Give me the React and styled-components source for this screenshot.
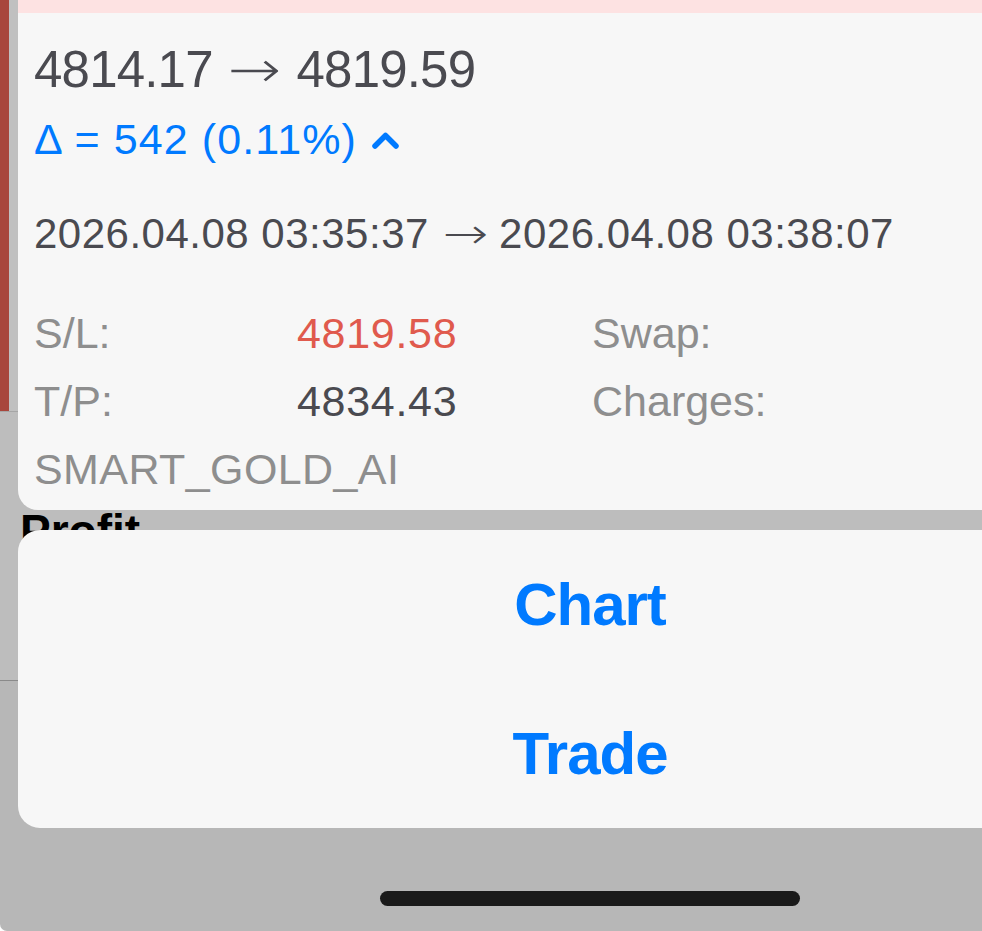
import styled, { createGlobalStyle } from "styled-components"

const GlobalStyle = createGlobalStyle`
  html, body {
    margin: 0;
    padding: 0;
    background: #ffffff;
    overflow: hidden;
  }
  body {
    font-family: "Liberation Sans", Arial, sans-serif;
  }
`

const Screen = styled.div`
  position: relative;
  width: 1180px;
  height: 931px;
  overflow: hidden;
  border-bottom-left-radius: 7px;
`

// the app page behind the menu, already dimmed
const Backdrop = styled.div`
  display: flex;
  flex-direction: column;
  height: 100%;
  background: #b7b7b7;
`
const TopArea = styled.div`
  display: flex;
  height: 411px;
  background: #c0c0c0;
`
const RedBar = styled.div`
  width: 9px;
  background: #a8463c;
`
const Rule = styled.div`
  height: 1px;
  background: ${(p) => p.$color};
`
const MiddleArea = styled.div`
  height: 268px;
  padding: 96px 0 0 20px;
  box-sizing: border-box;
  background: #bdbdbd;
`
const SectionTitle = styled.div`
  font-size: 46px;
  line-height: 46px;
  font-weight: 700;
  color: #000;
`

const Overlay = styled.div`
  position: absolute;
  inset: 0;
  display: flex;
  flex-direction: column;
  align-items: center;
`
const PreviewCard = styled.div`
  width: 1144px;
  height: 510px;
  background: #f7f7f7;
  border-bottom-left-radius: 20px;
  border-bottom-right-radius: 20px;
  overflow: hidden;
`
const PinkStrip = styled.div`
  height: 13px;
  background: #fde2e2;
`
const CardBody = styled.div`
  padding: 0 16px;
  color: #4a4a50;
`
const Prices = styled.div`
  margin-top: 31px;
  font-size: 51px;
  line-height: 51px;
  letter-spacing: -0.8px;
  white-space: nowrap;
`
const Arrow = styled.span`
  display: inline-block;
  margin-left: ${(p) => p.$before}px;
  margin-right: ${(p) => p.$after}px;
  font-family: "DejaVu Sans", sans-serif;
  font-weight: 300;
  letter-spacing: 0;
  transform: scaleX(${(p) => p.$stretch});
`
const Delta = styled.div`
  display: flex;
  align-items: center;
  gap: 15px;
  margin-top: 23px;
  font-size: 43px;
  line-height: 43px;
  letter-spacing: 1.1px;
  color: #007aff;
  white-space: nowrap;
`
const Times = styled.div`
  margin-top: 52px;
  font-size: 42px;
  line-height: 42px;
  letter-spacing: 0.5px;
  white-space: nowrap;
`
const InfoGrid = styled.div`
  display: grid;
  grid-template-columns: 263px 295px 1fr;
  margin-top: 44px;
  font-size: 43px;
  line-height: 68px;
`
const Label = styled.span`
  color: #8e8e8e;
  letter-spacing: ${(p) => (p.$wide ? "0.4px" : "0")};
`
const Value = styled.span`
  color: ${(p) => (p.$loss ? "#e05a4d" : "#4a4a50")};
  letter-spacing: 0.7px;
`

const ActionSheet = styled.div`
  display: flex;
  flex-direction: column;
  width: 1144px;
  margin-top: 20px;
  background: #f7f7f7;
  border-radius: 22px;
  overflow: hidden;
`
const SheetButton = styled.div`
  display: flex;
  align-items: center;
  justify-content: center;
  height: 149px;
  font-size: 60px;
  line-height: 60px;
  font-weight: 700;
  letter-spacing: -1px;
  color: #007aff;
`
const HomeIndicator = styled.div`
  width: 420px;
  height: 15px;
  margin-top: 63px;
  border-radius: 8px;
  background: #1a1a1a;
`

const Chevron = () => (
  <svg width="27" height="18" viewBox="0 0 27 18">
    <polyline
      points="3,15 13.5,4.5 24,15"
      fill="none"
      stroke="#007aff"
      strokeWidth="5.5"
      strokeLinecap="round"
      strokeLinejoin="round"
    />
  </svg>
)

const App = () => {
  return (
    <>
      <GlobalStyle />
      <Screen>
        <Backdrop>
          <TopArea>
            <RedBar />
          </TopArea>
          <Rule $color="#a6a6a6" />
          <MiddleArea>
            <SectionTitle>Profit</SectionTitle>
          </MiddleArea>
          <Rule $color="#8a8a8a" />
        </Backdrop>

        <Overlay>
          <PreviewCard>
            <PinkStrip />
            <CardBody>
              <Prices>
                4814.17
                <Arrow $before={20} $after={21} $stretch={1.25}>→</Arrow>
                4819.59
              </Prices>
              <Delta>
                <span>Δ = 542 (0.11%)</span>
                <Chevron />
              </Delta>
              <Times>
                2026.04.08 03:35:37
                <Arrow $before={19} $after={16} $stretch={1.3}>→</Arrow>
                2026.04.08 03:38:07
              </Times>
              <InfoGrid>
                <Label>S/L:</Label>
                <Value $loss>4819.58</Value>
                <Label>Swap:</Label>
                <Label>T/P:</Label>
                <Value>4834.43</Value>
                <Label>Charges:</Label>
                <Label $wide>SMART_GOLD_AI</Label>
              </InfoGrid>
            </CardBody>
          </PreviewCard>

          <ActionSheet>
            <SheetButton>Chart</SheetButton>
            <SheetButton>Trade</SheetButton>
          </ActionSheet>
          <HomeIndicator />
        </Overlay>
      </Screen>
    </>
  )
}

export default App
